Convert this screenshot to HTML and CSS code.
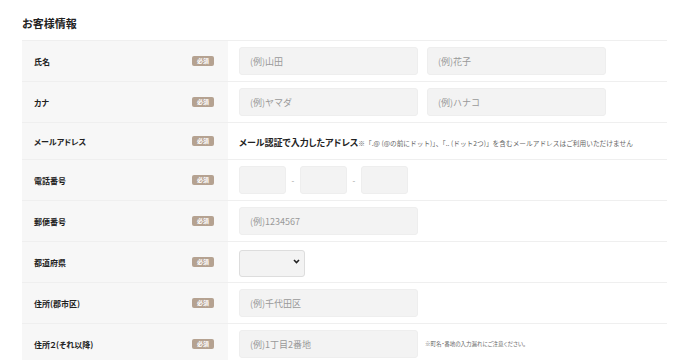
FILE: index.html
```html
<!DOCTYPE html>
<html lang="ja">
<head>
  <meta charset="UTF-8">
  <meta name="viewport" content="width=device-width, initial-scale=1.0">
  <title>お客様情報</title>
  <link rel="stylesheet" href="styles.css">
</head>
<body>
  <section class="form-block">
    <h2 class="form-title">お客様情報</h2>
    <div class="form-table">
      <div class="row">
        <div class="row-label"><span>氏名</span><span class="req">必須</span></div>
        <div class="row-body">
          <input class="text" type="text" placeholder="(例)山田">
          <input class="text" type="text" placeholder="(例)花子">
        </div>
      </div>
      <div class="row">
        <div class="row-label"><span>カナ</span><span class="req">必須</span></div>
        <div class="row-body">
          <input class="text" type="text" placeholder="(例)ヤマダ">
          <input class="text" type="text" placeholder="(例)ハナコ">
        </div>
      </div>
      <div class="row row-mail">
        <div class="row-label"><span>メールアドレス</span><span class="req">必須</span></div>
        <div class="row-body">
          <p class="mail"><span class="mail-main">メール認証で入力したアドレス</span><span class="note mail-note">※「.@ (@の前にドット)」、「.. (ドット2つ)」を含むメールアドレスはご利用いただけません</span></p>
        </div>
      </div>
      <div class="row">
        <div class="row-label"><span>電話番号</span><span class="req">必須</span></div>
        <div class="row-body tel">
          <input class="text short" type="tel">
          <span class="dash">-</span>
          <input class="text short" type="tel">
          <span class="dash">-</span>
          <input class="text short" type="tel">
        </div>
      </div>
      <div class="row">
        <div class="row-label"><span>郵便番号</span><span class="req">必須</span></div>
        <div class="row-body">
          <input class="text" type="text" placeholder="(例)1234567">
        </div>
      </div>
      <div class="row">
        <div class="row-label"><span>都道府県</span><span class="req">必須</span></div>
        <div class="row-body">
          <span class="select-wrap">
            <select class="pref">
              <option value=""></option>
              <option value="tokyo">東京都</option>
            </select>
            <svg class="chevron" width="7" height="5" viewBox="0 0 7 5"><path d="M1 1 L3.5 3.5 L6 1" fill="none" stroke="#222" stroke-width="1.6"/></svg>
          </span>
        </div>
      </div>
      <div class="row">
        <div class="row-label"><span>住所(郡市区)</span><span class="req">必須</span></div>
        <div class="row-body">
          <input class="text" type="text" placeholder="(例)千代田区">
        </div>
      </div>
      <div class="row">
        <div class="row-label"><span>住所２(それ以降)</span><span class="req">必須</span></div>
        <div class="row-body">
          <input class="text" type="text" placeholder="(例)1丁目2番地">
          <span class="note addr-note">※町名・番地の入力漏れにご注意ください。</span>
        </div>
      </div>
    </div>
  </section>
</body>
</html>
```

FILE: styles.css
```css
body { margin: 0; background: #fff; color: #222; font-family: "Noto Sans CJK JP", "Noto Sans", sans-serif; font-feature-settings: "palt"; }

.form-block { padding: 15px 23px 0 22px; }
.form-title { margin: 0 0 9px; font-size: 11px; line-height: 16px; font-weight: bold; color: #222; }

.form-table { width: 645px; }
.row { display: flex; border-top: 1px solid #efefef; }
.row-label { box-sizing: border-box; width: 206px; flex: none; display: flex; align-items: center; justify-content: space-between; padding: 0 14px 0 12px; background: #f7f7f7; font-size: 8px; font-weight: bold; color: #222; }
.req { background: #b5a291; color: #fff; font-size: 6px; line-height: 10px; padding: 0 5px; border-radius: 2px; font-weight: bold; }

.row-body { flex: 1; display: flex; align-items: center; gap: 9px; padding: 6px 11px; }
.text { box-sizing: border-box; width: 179px; height: 28px; margin: 0; padding: 0 10px; background: #f3f3f3; border: 1px solid #eeeeee; border-radius: 3px; font-family: inherit; font-size: 9px; color: #333; }
.text::placeholder { color: #999; }

.tel { gap: 0; }
.text.short { width: 47px; }
.dash { width: 14px; text-align: center; font-size: 8px; color: #999; }

.select-wrap { position: relative; display: inline-block; height: 28px; }
.pref { box-sizing: border-box; width: 66px; height: 27px; margin: 0; padding: 0 6px; appearance: none; background: #f3f3f3; border: 1px solid #dddddd; border-radius: 3px; font-family: inherit; font-size: 9px; }
.chevron { position: absolute; right: 5px; top: 11px; }

.row-mail .row-body { padding: 0 11px; height: 36px; }
.mail { margin: 0; line-height: 14px; }
.mail-main { font-size: 9px; font-weight: bold; color: #222; }
.note { color: #666; }
.mail-note { font-size: 6.7px; font-feature-settings: normal; }
.addr-note { font-size: 5.5px; margin-left: -2px; }
```
